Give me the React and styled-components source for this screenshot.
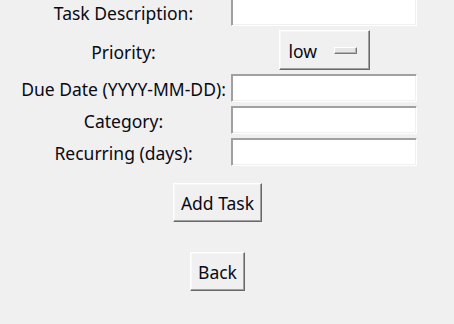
import React from "react";
import styled, { createGlobalStyle } from "styled-components";

const GlobalStyle = createGlobalStyle`
	html, body {
		margin: 0;
		padding: 0;
		background: #f0f0f0;
	}
	body {
		font-family: "Noto Sans", "Open Sans", sans-serif;
		font-size: 17.5px;
		color: #0a0a14;
	}
`;

const fields = [
	{ label: "Task Description:", kind: "entry" },
	{ label: "Priority:", kind: "menu" },
	{ label: "Due Date (YYYY-MM-DD):", kind: "entry" },
	{ label: "Category:", kind: "entry" },
	{ label: "Recurring (days):", kind: "entry" },
];

export default function App() {
	return (
		<Window>
			<GlobalStyle />
			<Form>
				{fields.map((f) => (
					<React.Fragment key={f.label}>
						<Label $tall={f.kind === "menu"}>{f.label}</Label>
						{f.kind === "menu" ? (
							<OptionMenu>
								<span>low</span>
								<Indicator />
							</OptionMenu>
						) : (
							<Entry type="text" />
						)}
					</React.Fragment>
				))}
				<ButtonRow $top={17}>
					<TkButton>Add Task</TkButton>
				</ButtonRow>
				<ButtonRow $top={30}>
					<TkButton>Back</TkButton>
				</ButtonRow>
			</Form>
		</Window>
	);
}

const Window = styled.div`
	width: 454px;
	height: 324px;
	overflow: hidden;
	background: #f0f0f0;
`;

const Form = styled.div`
	display: grid;
	grid-template-columns: 211px 186px;
	grid-auto-rows: auto;
	column-gap: 2px;
	row-gap: 4px;
	margin-left: 18px;
	margin-top: -2px;
	align-items: center;
`;

const Label = styled.div`
	text-align: center;
	line-height: 20px;
	white-space: nowrap;
	padding-top: ${(p) => (p.$tall ? "4px" : "2px")};
`;

const Entry = styled.input`
	box-sizing: border-box;
	width: 186px;
	height: 28px;
	margin: 0;
	padding: 0 3px;
	background: #ffffff;
	border: 1px solid;
	border-color: #a0a0a0 #ffffff #ffffff #a0a0a0;
	box-shadow: inset 1px 1px 0 #a0a0a0, inset -1px -1px 0 #f0f0f0;
	font: inherit;
	outline: none;
`;

const raised = `
	border: 1px solid;
	border-color: #ffffff #696969 #696969 #ffffff;
	box-shadow: inset -1px -1px 0 #a0a0a0, inset 1px 1px 0 #f7f7f7;
	background: #f0f0f0;
`;

const OptionMenu = styled.div`
	box-sizing: border-box;
	justify-self: center;
	display: flex;
	align-items: center;
	height: 40px;
	width: 91px;
	padding: 0 12px 0 9px;
	${raised}
	span {
		flex: 1;
		line-height: 20px;
		margin-top: 2px;
	}
`;

const Indicator = styled.div`
	box-sizing: border-box;
	width: 23px;
	height: 7px;
	border: 1px solid;
	border-color: #ffffff #7a7a7a #7a7a7a #ffffff;
	box-shadow: inset -1px -1px 0 #b4b4b4;
	background: #e6e6e6;
`;

const ButtonRow = styled.div`
	grid-column: 1 / span 2;
	display: flex;
	justify-content: center;
	margin-top: ${(p) => p.$top - 4}px;
`;

const TkButton = styled.button`
	box-sizing: border-box;
	height: 39px;
	padding: 0 7px;
	margin: 0;
	font: inherit;
	color: inherit;
	line-height: 20px;
	${raised}
`;
